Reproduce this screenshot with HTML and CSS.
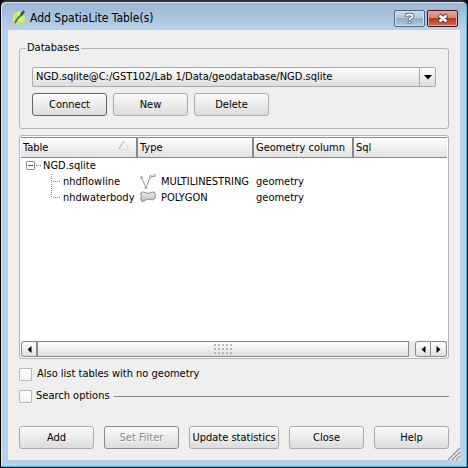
FILE: index.html
```html
<!DOCTYPE html>
<html lang="en">
<head>
<meta charset="utf-8">
<meta name="viewport" content="width=device-width, initial-scale=1">
<title>Add SpatiaLite Table(s)</title>
<link rel="stylesheet" href="styles.css">
</head>
<body>
<div class="window">
  <header class="titlebar">
    <svg class="app-icon" width="14" height="16" viewBox="0 0 14 16" aria-hidden="true">
      <path d="M8 2.500C4 2 2 5 2 8c0 3 1.500 5 4 5.500M11.500 6c1 3 0 6-3 7" fill="none" stroke="#d9ea62" stroke-width="2.500"/>
      <path d="M5 4c2-1 4-1 6 1l-1 6-4 1-2-3z" fill="#e6f283"/>
      <path d="M8 12l4 2-2 1z" fill="#c6dc3c"/>
      <path d="M12 1L9.500 5 6 8l-3 5" fill="none" stroke="#3b8a2c" stroke-width="2"/>
      <path d="M12 1L9 5" stroke="#1d5b20" stroke-width="2"/>
    </svg>
    <h1 class="title">Add SpatiaLite Table(s)</h1>
    <button class="caption-btn" type="button" aria-label="What's this?">
      <svg width="11" height="13" viewBox="0 0 11 13" aria-hidden="true">
        <path d="M2.500 5V4Q2.500 2.500 5.500 2.500T8.500 4.200Q8.500 5.500 7 6.200 5.500 7 5.500 8.500M5.500 9.500v2.500" fill="none" stroke="#4d5566" stroke-width="3.500"/>
        <path d="M2.500 4.600V4Q2.500 2.500 5.500 2.500T8.500 4.200Q8.500 5.500 7 6.200 5.500 7 5.500 8.200M5.500 10v1.500" fill="none" stroke="#fff" stroke-width="2"/>
      </svg>
    </button>
    <button class="caption-btn caption-close" type="button" aria-label="Close window">
      <svg width="12" height="11" viewBox="0 0 12 11" aria-hidden="true">
        <path d="M2 2l8 7M10 2L2 9" stroke="#51424c" stroke-width="4.500"/>
        <path d="M2.500 2.500l7 6M9.500 2.500l-7 6" stroke="#fff" stroke-width="2.500"/>
      </svg>
    </button>
  </header>

  <main class="content">
    <fieldset class="group">
      <legend>Databases</legend>
      <div class="combo">
        <select aria-label="Database connection">
          <option>NGD.sqlite@C:/GST102/Lab 1/Data/geodatabase/NGD.sqlite</option>
        </select>
        <svg class="combo-arrow" width="16" height="18" viewBox="0 0 16 18" aria-hidden="true">
          <path d="M.5 0v18" stroke="#aaa"/><path d="M5 7h8L9 11.500z" fill="#000"/>
        </svg>
      </div>
      <div class="group-buttons">
        <button class="btn btn-default" type="button">Connect</button>
        <button class="btn" type="button">New</button>
        <button class="btn" type="button">Delete</button>
      </div>
    </fieldset>

    <section class="list" aria-label="Tables">
      <table class="tree">
        <colgroup><col class="col-table"><col class="col-type"><col class="col-geometry"><col></colgroup>
        <thead>
          <tr>
            <th scope="col"><span class="sort-head">Table
              <svg width="12" height="11" viewBox="0 0 12 11" aria-hidden="true"><path d="M.5 9.500L6 1" stroke="#aaa"/><path d="M6 1l5 8.500H0" fill="none" stroke="#ddd"/></svg></span></th>
            <th scope="col">Type</th>
            <th scope="col">Geometry column</th>
            <th scope="col">Sql</th>
          </tr>
        </thead>
        <tbody>
          <tr>
            <td><span class="node">
              <svg width="22" height="16" viewBox="0 0 22 16" aria-hidden="true"><rect x="5.500" y="3.500" width="8" height="8" rx="1" fill="#fff" stroke="#888"/><path d="M7 7.500h5" stroke="#555"/><path d="M15 7.500h6" stroke="#888" stroke-dasharray="1 1"/></svg>NGD.sqlite</span></td>
            <td></td><td></td><td></td>
          </tr>
          <tr>
            <td><span class="node">
              <svg width="42" height="16" viewBox="0 0 42 16" aria-hidden="true"><path d="M30.500 0v16M32 7.500h8" stroke="#888" stroke-dasharray="1 1"/></svg>nhdflowline</span></td>
            <td><span class="node type">
              <svg width="16" height="16" viewBox="0 0 16 16" aria-hidden="true"><path d="M1.500 3.500L6 13.500 10.500 2.500h4" fill="none" stroke="#999"/><g fill="#fff" stroke="#888"><circle cx="1.500" cy="3.500" r="1"/><circle cx="6" cy="13.500" r="1"/><circle cx="10.500" cy="2.500" r="1"/><circle cx="14.500" cy="1.500" r="1"/></g></svg>MULTILINESTRING</span></td>
            <td>geometry</td><td></td>
          </tr>
          <tr>
            <td><span class="node">
              <svg width="42" height="16" viewBox="0 0 42 16" aria-hidden="true"><path d="M30.500 0v8M32 7.500h8" stroke="#888" stroke-dasharray="1 1"/></svg>nhdwaterbody</span></td>
            <td><span class="node type">
              <svg width="16" height="16" viewBox="0 0 16 16" aria-hidden="true"><defs><linearGradient id="poly" x2="0" y2="1"><stop stop-color="#eee"/><stop offset="1" stop-color="#bbb"/></linearGradient></defs><path d="M.8 3Q2 1 5 2.500T10 3 14.500 2q1.500 2 .5 6-2 3-5 1.500T5 10.500Q1 13 .8 9 2 6 .8 3z" fill="url(#poly)" stroke="#8b8b8b"/></svg>POLYGON</span></td>
            <td>geometry</td><td></td>
          </tr>
        </tbody>
      </table>
      <div class="scrollbar">
        <button class="arrow arrow-left" type="button" aria-label="Scroll left"><svg width="5" height="7" viewBox="0 0 5 7" aria-hidden="true"><path d="M4.500 0v7L.5 3.500z"/></svg></button>
        <div class="thumb">
          <svg width="18" height="11" viewBox="0 0 18 11" aria-hidden="true"><path d="M0 1h18M0 5h18M0 9h18" stroke="#b4b4b4" stroke-width="2" stroke-dasharray="2 2"/></svg>
        </div>
        <button class="arrow" type="button" aria-label="Page left"><svg width="5" height="7" viewBox="0 0 5 7" aria-hidden="true"><path d="M4.500 0v7L.5 3.500z"/></svg></button>
        <button class="arrow arrow-right" type="button" aria-label="Scroll right"><svg width="5" height="7" viewBox="0 0 5 7" aria-hidden="true"><path d="M.5 0v7l4-3.500z"/></svg></button>
      </div>
    </section>

    <div class="option">
      <input type="checkbox" id="no-geometry"><label for="no-geometry">Also list tables with no geometry</label>
    </div>
    <div class="option option-group">
      <input type="checkbox" id="search-options"><label for="search-options">Search options</label>
    </div>

    <footer class="actions">
      <button class="btn" type="button">Add</button>
      <button class="btn btn-disabled" type="button" disabled>Set Filter</button>
      <button class="btn btn-wide" type="button">Update statistics</button>
      <button class="btn" type="button">Close</button>
      <button class="btn" type="button">Help</button>
    </footer>
    <svg class="grip" width="12" height="12" viewBox="0 0 12 12" aria-hidden="true"><path d="M0 12L12 0M4 12l8-8M8 12l4-4" stroke="#999" stroke-width="1.500"/></svg>
  </main>
</div>
</body>
</html>
```

FILE: styles.css
```css
* {
  box-sizing: border-box;
}

body {
  margin: 0;
  background: #000;
  color: #000;
  font: 11px/16px "DejaVu Sans Condensed", "Noto Sans", sans-serif;
}

button,
select,
input {
  margin: 0;
  padding: 0;
  font: inherit;
  color: inherit;
}

svg {
  display: block;
  flex: none;
}

.window {
  display: flex;
  flex-direction: column;
  min-height: 100vh;
  padding: 0 7px 7px;
  border: 1px solid #000;
  border-top: 2px solid #302f39;
  border-radius: 6px 6px 0 0;
  background: linear-gradient(#9ab4d2, #b9d1ea 28px, #b9d1ea);
  box-shadow: inset -1px -1px #29c5e6, inset 1px 1px #dce8f5;
}

.titlebar {
  display: flex;
  align-items: center;
  gap: 2px;
  height: 28px;
  padding: 4px 2px 0 4px;
}

.title {
  flex: 1;
  margin: 0 0 0 2px;
  font: 12px/16px "DejaVu Sans Condensed", "Noto Sans", sans-serif;
}

.caption-btn {
  display: grid;
  place-items: center;
  width: 31px;
  height: 17px;
  border: 1px solid #51647e;
  border-radius: 2px;
  background: linear-gradient(#c4d6e9, #b4c9df 50%, #90adc9 50%, #b0cae3);
  box-shadow: inset 0 0 0 1px #d3e1f0;
}

.caption-close {
  border-color: #43141a;
  background: linear-gradient(#e5a295, #d78474 50%, #b53a22 50%, #cf6e50);
  box-shadow: inset 0 0 0 1px #e4a99d;
}

.content {
  position: relative;
  display: flex;
  flex: 1;
  flex-direction: column;
  padding: 10px 11px 11px;
  background: #efefef;
}

.group {
  min-width: 0;
  margin: 0 0 6px;
  padding: 11px 12px 12px;
  border: 1px solid #b4b4b4;
  border-radius: 3px;
}

.group legend {
  margin-left: -6px;
  padding: 0 2px 0 1px;
}

.combo {
  position: relative;
}

.combo select {
  display: block;
  width: 100%;
  height: 20px;
  padding: 0 20px 0 3px;
  border: 1px solid #aaa;
  border-radius: 2px;
  background: linear-gradient(#fcfcfc, #dedede);
  appearance: none;
}

.combo-arrow {
  position: absolute;
  top: 1px;
  right: 1px;
  pointer-events: none;
}

.group-buttons {
  display: flex;
  gap: 6px;
  margin-top: 6px;
}

.btn {
  width: 75px;
  height: 23px;
  border: 1px solid #aaa;
  border-radius: 3px;
  background: linear-gradient(#fbfbfb, #dcdcdc);
  white-space: nowrap;
}

.btn-default {
  border-color: #666;
}

.btn-disabled {
  border-color: #888;
  color: #8a8a8a;
  text-shadow: 1px 1px #fff;
}

.btn-wide {
  width: 90px;
}

.list {
  display: flex;
  flex: 1;
  flex-direction: column;
  margin-bottom: 8px;
  padding: 1px;
  border: 1px solid #b4b4b4;
  border-radius: 3px;
  background: #fff;
}

.tree {
  width: 100%;
  border-spacing: 0;
  table-layout: fixed;
}

.col-table {
  width: 117px;
}

.col-type {
  width: 116px;
}

.col-geometry {
  width: 100px;
}

.tree th {
  height: 21px;
  padding: 0 2px;
  border: solid #888;
  border-width: 1px 2px 1px 0;
  background: linear-gradient(#fff, #e2e2e2);
  font-weight: normal;
  text-align: left;
}

.tree th:last-child {
  border-right: 0;
}

.tree td {
  height: 16px;
  padding: 0 0 0 2px;
  line-height: 16px;
  white-space: nowrap;
}

.tree td:first-child {
  padding: 0;
}

.sort-head {
  display: flex;
  justify-content: space-between;
  padding-right: 4px;
}

.node {
  display: flex;
}

.type {
  gap: 5px;
}

.scrollbar {
  display: flex;
  height: 16px;
  margin-top: auto;
  background: #e8e8e8;
}

.arrow {
  display: grid;
  place-items: center;
  width: 16px;
  border: 1px solid #888;
  border-radius: 3px 0 0 3px;
  background: linear-gradient(#fff, #e0e0e0);
}

.arrow-right {
  border-left: 0;
  border-radius: 0 3px 3px 0;
}

.thumb {
  display: grid;
  flex: 1;
  place-items: center;
  margin-right: 6px;
  border: 1px solid #888;
  background: linear-gradient(#fff, #dedede);
}

.option {
  display: flex;
  align-items: center;
  gap: 5px;
  height: 14px;
  margin-bottom: 8px;
}

.option input {
  width: 13px;
  height: 13px;
  border: 1px solid #b8b8b8;
  border-radius: 1px;
  background: linear-gradient(#fff, #f4f4f4);
  appearance: none;
}

.option-group {
  gap: 4px;
  margin-bottom: 23px;
}

.option-group::after {
  flex: 1;
  height: 1px;
  background: #888;
  content: "";
}

.actions {
  display: flex;
  justify-content: space-between;
}

.grip {
  position: absolute;
  right: 0;
  bottom: 0;
}
```
